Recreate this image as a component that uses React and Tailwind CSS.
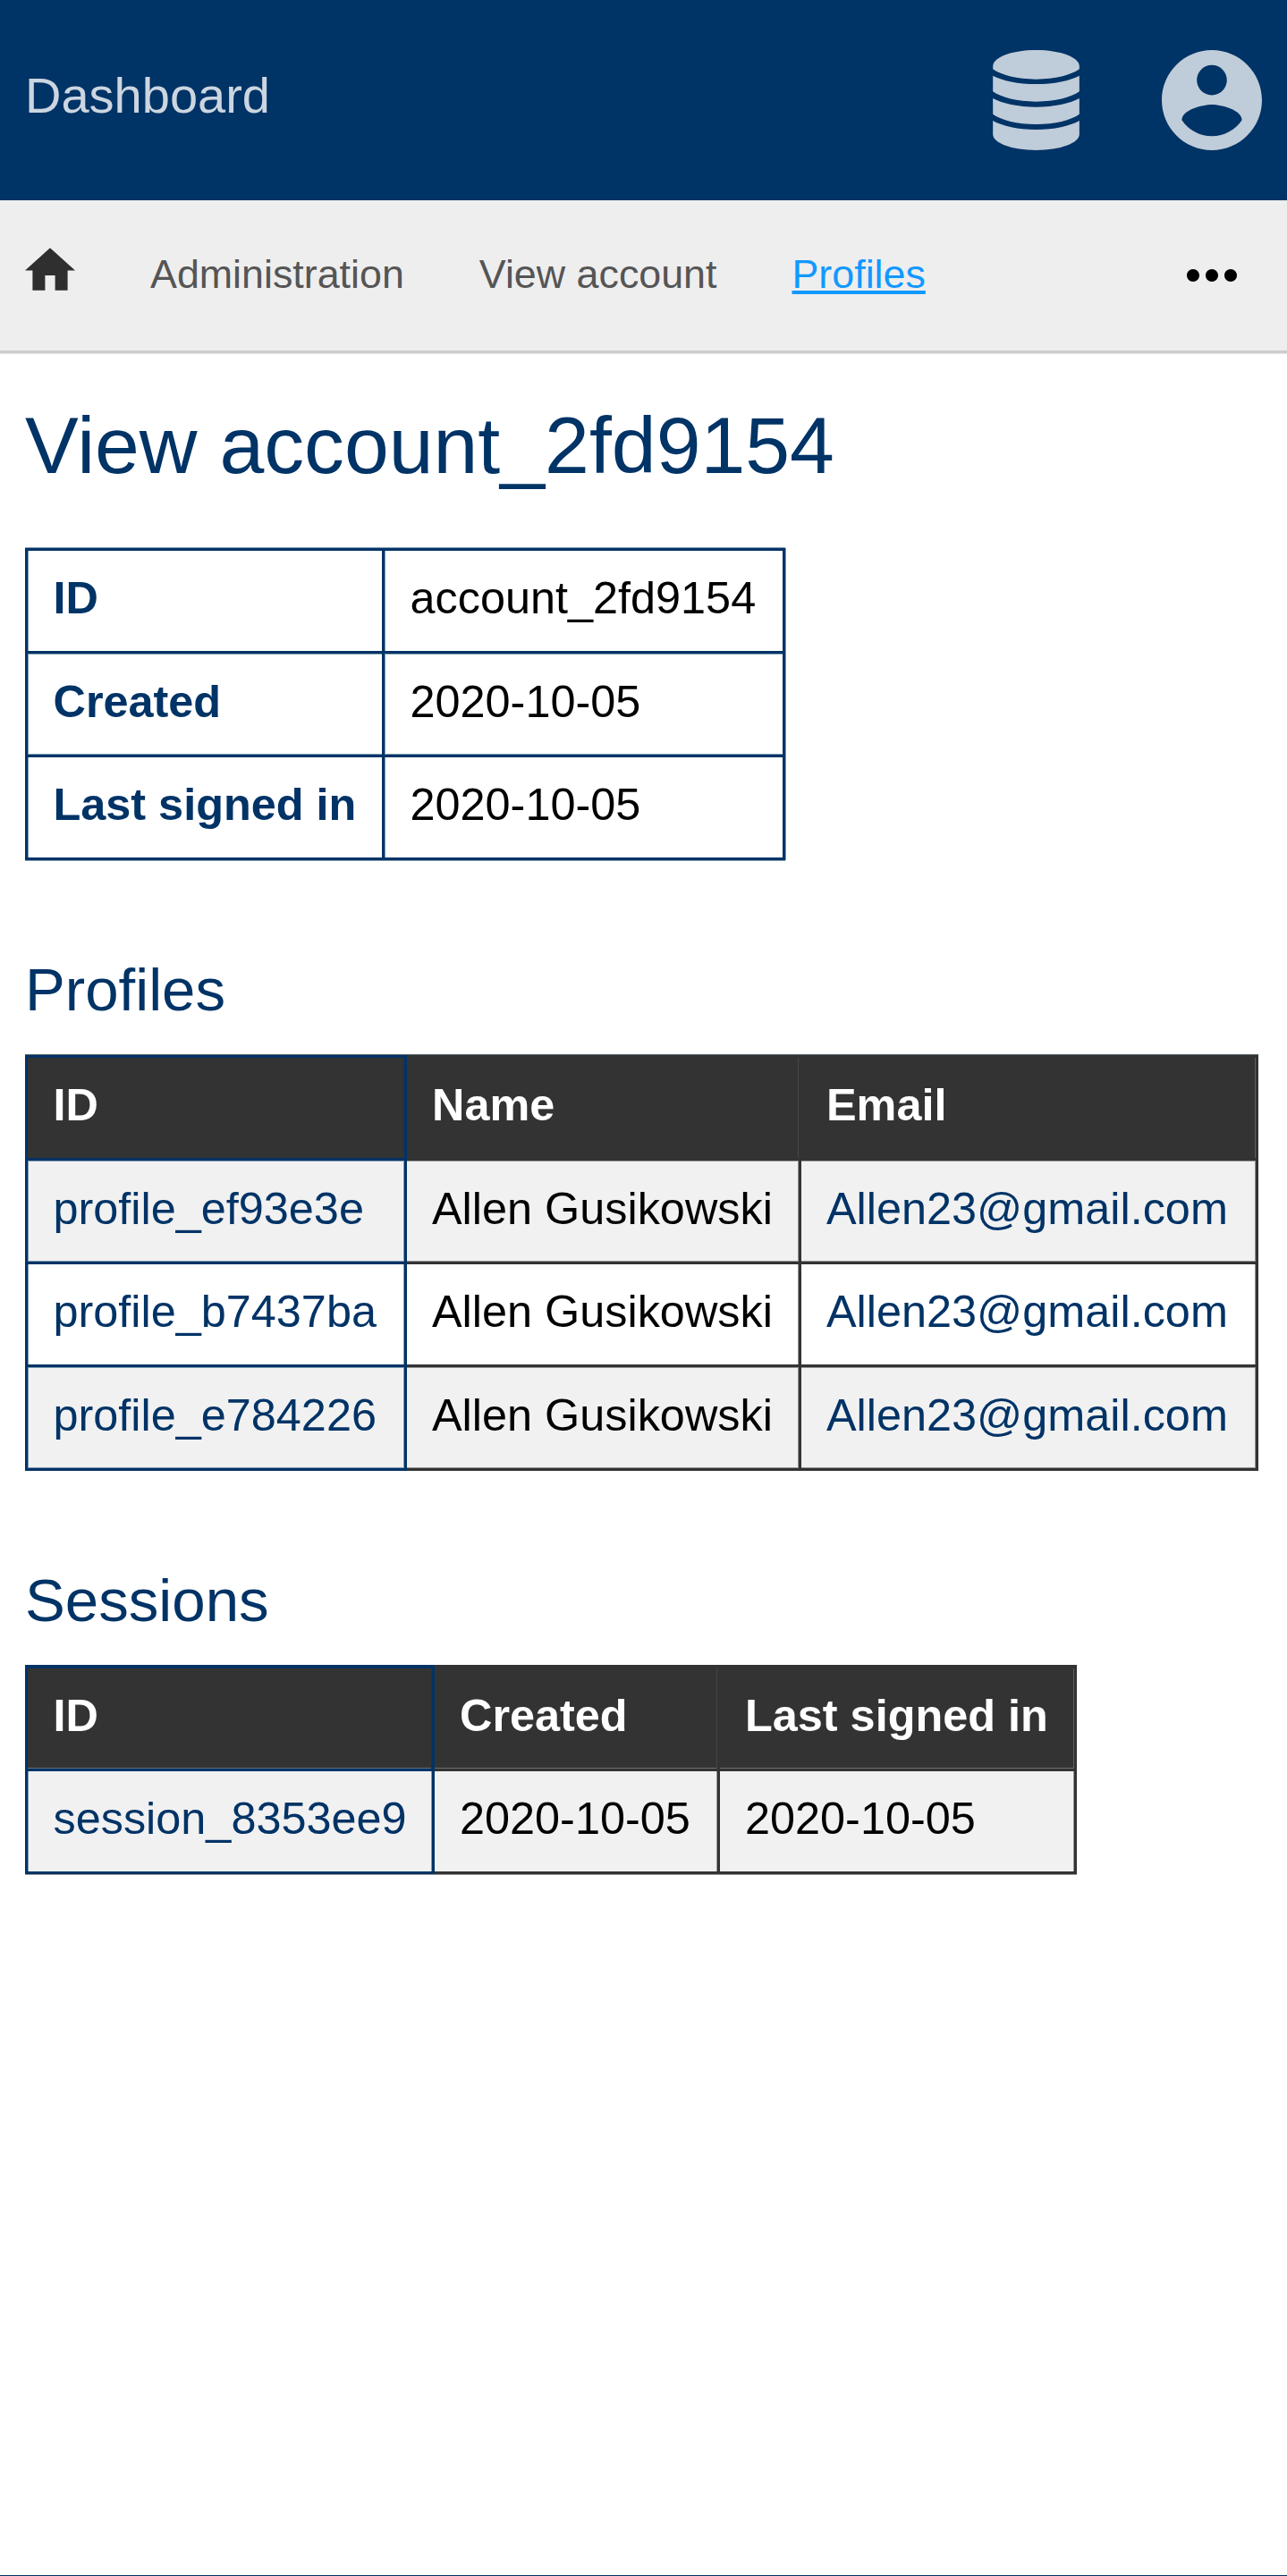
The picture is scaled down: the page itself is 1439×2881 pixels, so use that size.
import { MdHome, MdMoreHoriz } from "react-icons/md";

function DatabaseIcon({ className }) {
  return (
    <svg viewBox="0 0 290 336" fill="currentColor" className={className}>
      <path d="M0 54C0 24 64 0 145 0S290 24 290 54V64C262 84 208 98 145 98S28 84 0 64Z" />
      <path d="M0 86C32 103 85 114 145 114S258 103 290 86V139C262 159 208 173 145 173S28 159 0 139Z" />
      <path d="M0 162C32 179 85 191 145 191S258 179 290 162V215C262 235 208 249 145 249S28 235 0 215Z" />
      <path d="M0 237C32 255 85 267 145 267S258 255 290 237V283C290 312 226 336 145 336S0 312 0 283Z" />
    </svg>
  );
}

function AccountIcon({ className }) {
  return (
    <svg viewBox="2 2 20 20" fill="currentColor" className={className}>
      <path d="M12 2C6.48 2 2 6.48 2 12s4.48 10 10 10 10-4.48 10-10S17.52 2 12 2zm0 3c1.66 0 3 1.34 3 3s-1.34 3-3 3-3-1.34-3-3 1.34-3 3-3zm0 14.2c-2.5 0-4.71-1.28-6-3.22.03-1.99 4-3.08 6-3.08 1.99 0 5.97 1.09 6 3.08-1.29 1.94-3.5 3.22-6 3.22z" />
    </svg>
  );
}

const blueCell = "border-l-3 border-[#003366] pl-[28.5px]";
const darkCell = "border-[#333] pl-[28px]";

// Soft one-pixel edges along the inside of a cell's borders.
const offsets = { l: "1px 0", r: "-1px 0", t: "0 1px", b: "0 -1px" };
const edges = (sides, color) =>
  [...sides].map((s) => `inset ${offsets[s]} 0 ${color}`).join(", ");

function Table({ head, rows, widths, heights, rowEdges, headEdge = "", className = "", headClass = "border-t-3" }) {
  const seams = ["#1a3350", "#474747", "#606060"];
  return (
    <table className={`table-fixed border-separate border-spacing-0 text-[50.4px] leading-[58px] ${className}`} style={{ width: widths.reduce((a, b) => a + b, 0) }}>
      <colgroup>
        {widths.map((w, i) => <col key={i} style={{ width: w }} />)}
      </colgroup>
      <thead>
        <tr style={{ height: heights[0] }}>
          {head.map((h, i) => (
            <th
              key={i}
              className={`${headClass} border-r-3 border-b-3 bg-[#333] pt-0 pr-0 pb-[7px] text-left font-bold whitespace-nowrap text-white ${i === 0 ? blueCell : darkCell}`}
              style={{ boxShadow: [edges("r", seams[i]), edges(headEdge, i === 0 ? "#5f7080" : "#707070")].filter(Boolean).join(", ") }}
            >
              {h}
            </th>
          ))}
        </tr>
      </thead>
      <tbody>
        {rows.map((row, r) => (
          <tr key={r} className="odd:bg-[#f1f1f1]" style={{ height: heights[r + 1] }}>
            {row.map((c, i) => (
              <td
                key={i}
                className={`border-r-3 border-b-3 pt-0 pr-0 pb-[6px] whitespace-nowrap ${i === 0 ? blueCell : darkCell} ${i === 0 || c.includes("@") ? "text-[#003366]" : "text-black"}`}
                style={{ boxShadow: edges((i === 0 ? "lr" : "r") + rowEdges[r], i === 0 ? "#7f99b2" : "#949494") }}
              >
                {c}
              </td>
            ))}
          </tr>
        ))}
      </tbody>
    </table>
  );
}

const details = [
  ["ID", "account_2fd9154", 118, "l"],
  ["Created", "2020-10-05", 116, "ltb"],
  ["Last signed in", "2020-10-05", 115, "l"],
];

export default function App() {
  return (
    <div className="flex h-[2881px] w-[1439px] flex-col overflow-hidden border-b border-[#003366] bg-white font-['Liberation_Sans',Arial,sans-serif]">
      <header className="flex h-[224px] shrink-0 items-center bg-[#003366] px-[28px]">
        <span className="flex-1 pb-[10px] text-[56px] leading-[64px] text-[#ccd6e0]">Dashboard</span>
        <DatabaseIcon className="mr-[92px] h-[112px] w-[97px] text-[#bfccd9]" />
        <AccountIcon className="h-[112px] w-[112px] text-[#bfccd9]" />
      </header>
      <nav className="flex h-[171px] shrink-0 items-center gap-[84px] border-b-3 border-[#ccc] bg-[#eee] px-[28px] text-[44.8px] leading-[52px] text-[#555] shadow-[0_1px_0_#e5e5e5]">
        <MdHome viewBox="2 3 20 17" className="mb-[14px] h-[48px] w-[56px] text-[#2f2f2f]" />
        <span className="mb-[4px]">Administration</span>
        <span className="mb-[4px]">View account</span>
        <a className="mb-[4px] text-[#1299ff] underline decoration-4 underline-offset-[3px]">Profiles</a>
        <MdMoreHoriz viewBox="4 10 16 4" className="mr-[28px] ml-auto h-[14px] w-[56px] text-black" />
      </nav>
      <main className="px-[28px] text-[#003366]">
        <h1 className="mt-[52px] h-[166px] text-[89.6px] leading-[102px]">View account_2fd9154</h1>
        <table className="w-[850px] table-fixed border-separate border-spacing-0 text-[50.4px] leading-[58px] shadow-[1px_0_0_#7f99b2,0_1px_0_#7f99b2,0_-1px_0_#7f99b2]">
          <colgroup>
            <col className="w-[402px]" />
            <col className="w-[448px]" />
          </colgroup>
          <tbody>
            {details.map(([k, v, h, sides], i) => (
              <tr key={k} style={{ height: h }}>
                <th className={`border-r-3 border-b-3 border-l-3 border-[#003366] pt-0 pr-0 pb-[6px] pl-[28.5px] text-left font-bold ${i === 0 ? "border-t-3" : ""}`} style={{ boxShadow: edges(sides, "#7f99b2") }}>{k}</th>
                <td className={`border-r-3 border-b-3 border-[#003366] pt-0 pr-0 pb-[6px] pl-[28.5px] text-black ${i === 0 ? "border-t-3" : ""}`} style={{ boxShadow: edges(sides, "#7f99b2") }}>{v}</td>
              </tr>
            ))}
          </tbody>
        </table>
        <h2 className="mt-[107px] h-[111px] text-[67.2px] leading-[76px]">Profiles</h2>
        <Table
          className="shadow-[0_-1px_0_#5a6468]"
          head={["ID", "Name", "Email"]}
          rows={[
            ["profile_ef93e3e", "Allen Gusikowski", "Allen23@gmail.com"],
            ["profile_b7437ba", "Allen Gusikowski", "Allen23@gmail.com"],
            ["profile_e784226", "Allen Gusikowski", "Allen23@gmail.com"],
          ]}
          widths={[427, 441, 511]}
          heights={[118, 116, 115, 116]}
          rowEdges={["tb", "", "tb"]}
        />
        <h2 className="mt-[107px] h-[110px] text-[67.2px] leading-[76px]">Sessions</h2>
        <Table
          className="shadow-[0_1px_0_#949494]"
          headClass="border-t-4"
          headEdge="b"
          head={["ID", "Created", "Last signed in"]}
          rows={[["session_8353ee9", "2020-10-05", "2020-10-05"]]}
          widths={[458, 319, 399]}
          heights={[119, 115]}
          rowEdges={[""]}
        />
      </main>
    </div>
  );
}
